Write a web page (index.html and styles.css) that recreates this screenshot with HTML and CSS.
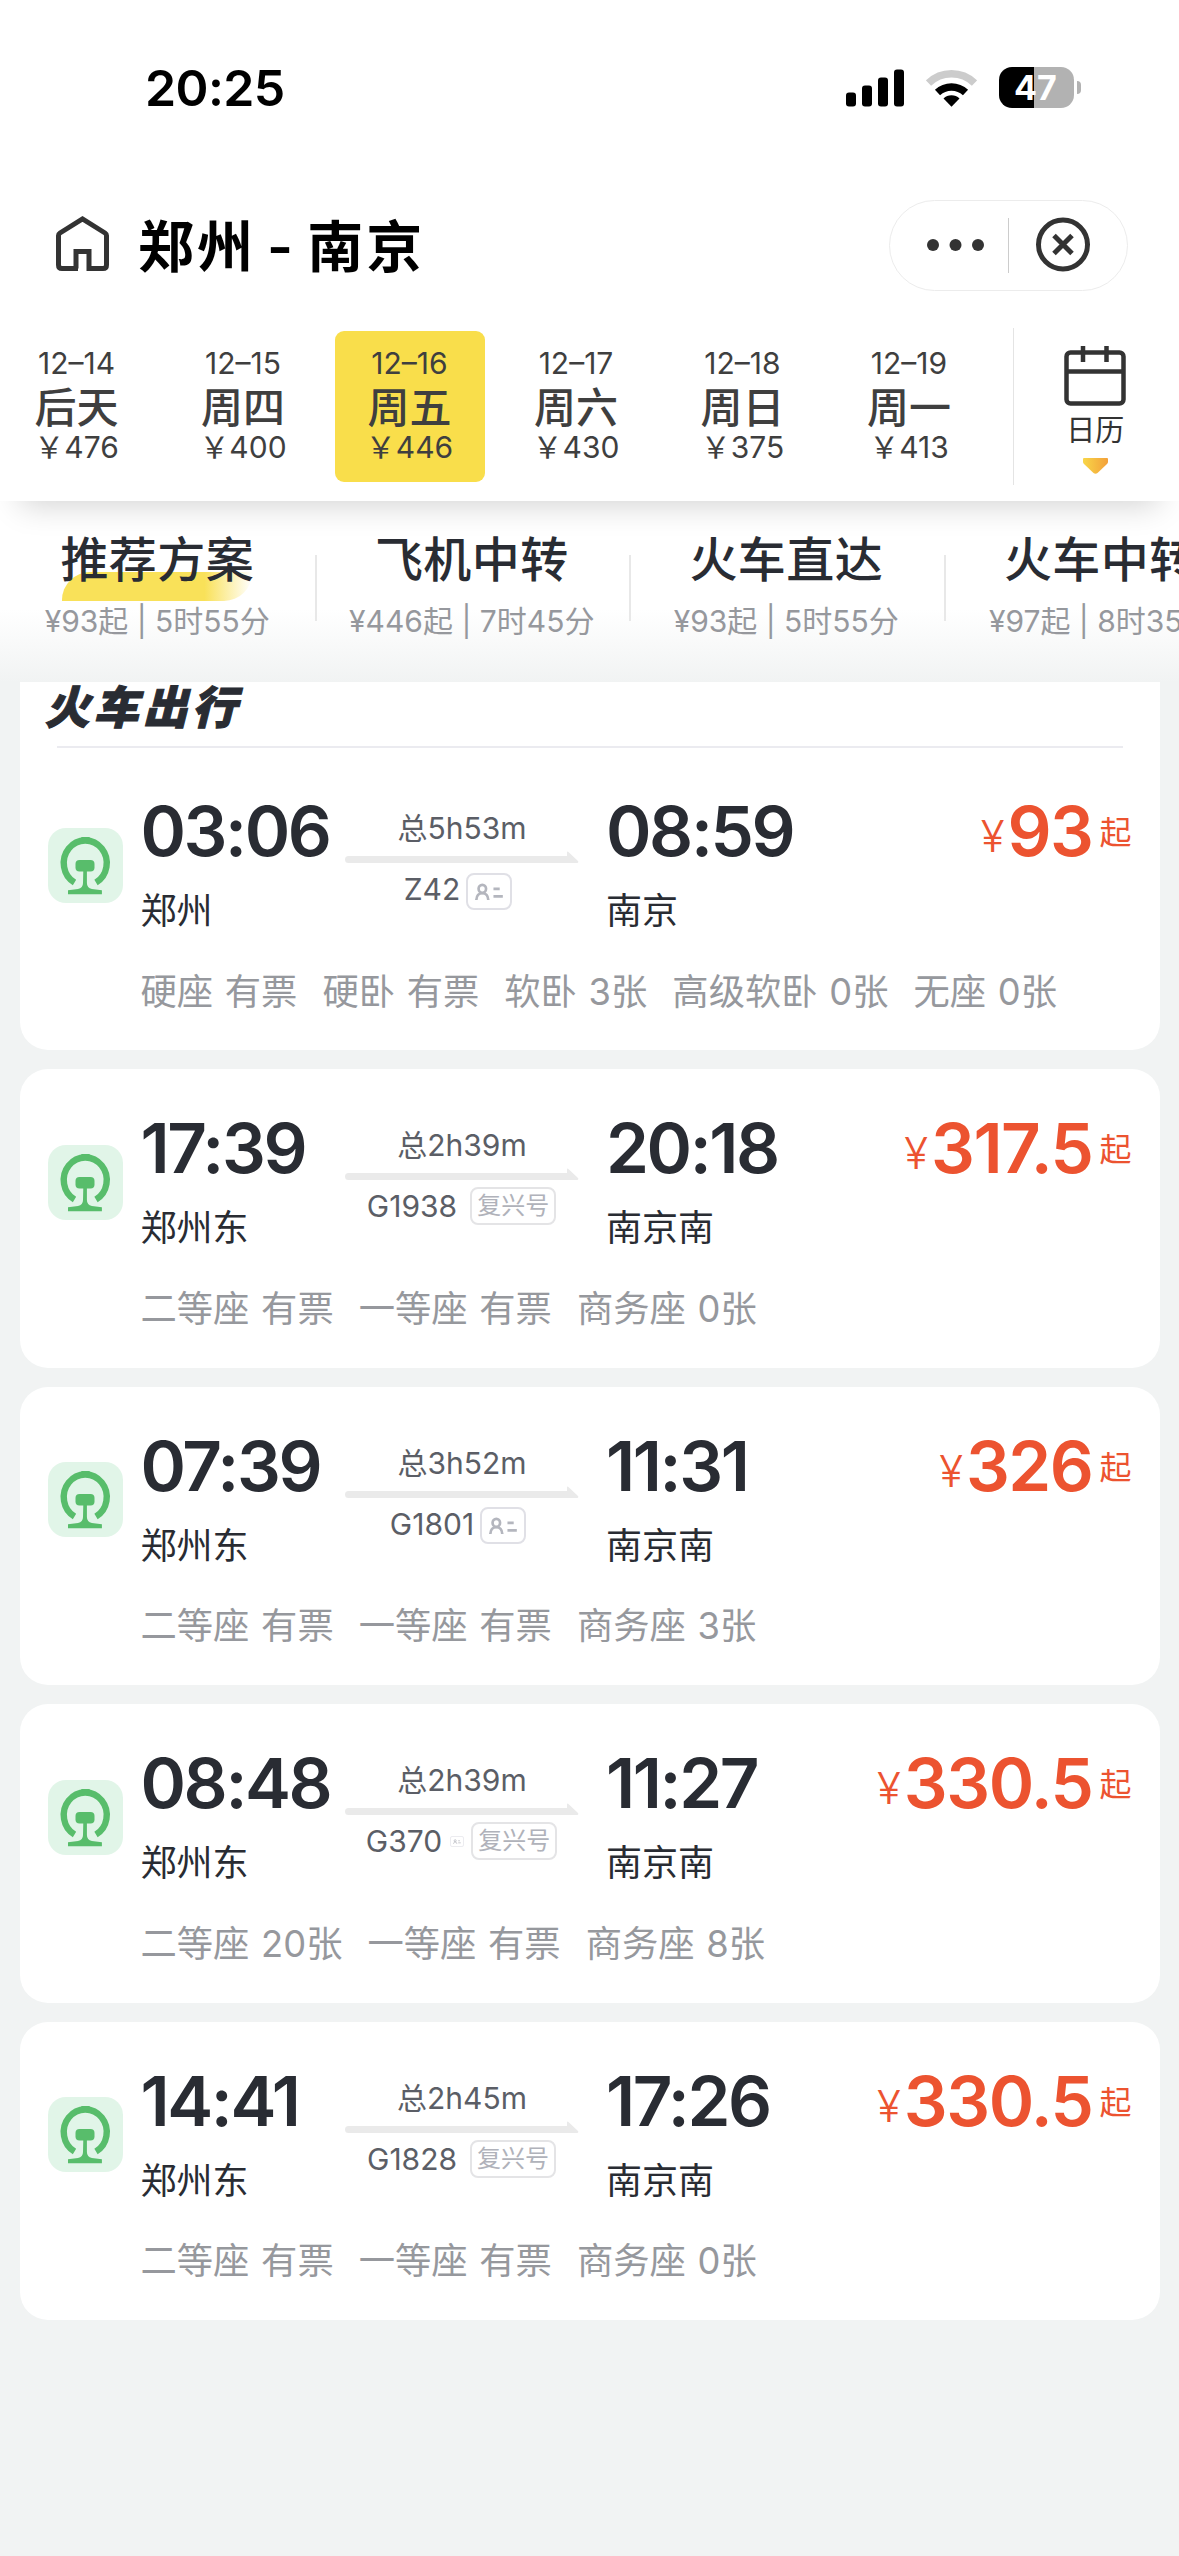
FILE: index.html
```html
<!DOCTYPE html>
<html lang="zh">
<head>
    <meta charset="UTF-8">
    <meta name="viewport" content="width=device-width, initial-scale=1.0">
    <title>郑州 - 南京</title>
    <link rel="stylesheet" href="styles.css">
</head>
<body>
<svg width="0" height="0" class="defs">
    <!-- 铁路图标 -->
    <symbol id="rail" viewBox="0 0 75 75">
        <path d="M26.5 54.5A21.5 22.500 0 1 1 48 54.500" fill="none" stroke="#58bd6b" stroke-width="6.400"/>
        <path d="M34 9h7q1 0 1.500 1.500L44 14H31l1.500-3.500Q33 9 34 9z" fill="#58bd6b"/>
        <rect x="27.500" y="32" width="19" height="11.500" rx="4" fill="#58bd6b"/>
        <path d="M35.300 42h3.600v13q0 5 5 6l10 1.300v4H20v-4l10-1.300q5-1 5-6z" fill="#58bd6b"/>
    </symbol>
    <symbol id="idcard" viewBox="0 0 46 37">
        <g fill="none" stroke="#b4b6be" stroke-width="3">
            <ellipse cx="15.500" cy="15.500" rx="4.200" ry="4.500"/>
            <path d="M8.800 28c.3-5 3-7.500 6.700-7.500s6.400 2.500 6.700 7.500"/>
            <path d="M28 15.500h7M28 24h10.500"/>
        </g>
    </symbol>
    <symbol id="arrow" viewBox="0 0 234 12">
        <path d="M3.500 5H222V1.500q0-2 2 0L233 10q1 2-1 2H3.500a3.500 3.500 0 0 1 0-7z" fill="#eaeaea"/>
    </symbol>
</svg>

<div class="header">
    <div class="status">
        <span class="clock">20:25</span>
        <svg class="signal" width="58" height="38" viewBox="0 0 58 38">
            <rect x="0" y="23.500" width="10" height="14" rx="3"/>
            <rect x="16" y="16.500" width="10" height="21" rx="3"/>
            <rect x="32" y="8.500" width="10" height="29" rx="3"/>
            <rect x="48" y="0.500" width="10" height="37" rx="3"/>
        </svg>
        <svg class="wifi" width="51" height="38" viewBox="0 0 51 38">
            <path d="M2.500 14A33 33 0 0 1 48.500 14" fill="none" stroke="#ccc" stroke-width="7.500"/>
            <path d="M11.500 23.500A20.500 20.500 0 0 1 39.500 23.500" fill="none" stroke="#000" stroke-width="7.500"/>
            <path d="M17.500 29.500a11.500 11.500 0 0 1 16 0l-8 8.200z"/>
        </svg>
        <div class="battery"><span>47</span></div>
        <i class="battery-cap"></i>
    </div>
    <div class="titlebar">
        <svg class="home" width="53" height="56" viewBox="0 0 53 56" fill="none" stroke="#333" stroke-width="5">
            <path d="M22 52.500H6Q2.500 52.500 2.500 49V19.500Q2.500 18 4 17L26.500 3 49 17Q50.500 18 50.500 19.500V49Q50.500 52.500 47 52.500H33V35.500H20V52.500"/>
        </svg>
        <h1>郑州 - 南京</h1>
        <div class="capsule">
            <svg width="237" height="89" viewBox="0 0 237 89">
                <g fill="#333"><circle cx="43" cy="44" r="6"/><circle cx="65.500" cy="44" r="6"/><circle cx="88" cy="44" r="6"/></g>
                <path d="M118.500 17v55" stroke="#ccc" stroke-width="1"/>
                <circle cx="173" cy="43.500" r="24.500" fill="none" stroke="#333" stroke-width="5"/>
                <path d="M164 34.500l18 18m0-18l-18 18" stroke="#333" stroke-width="5"/>
            </svg>
        </div>
    </div>
    <div class="dates">
        <div class="day"><span>12–14</span><b>后天</b><span>￥476</span></div>
        <div class="day"><span>12–15</span><b>周四</b><span>￥400</span></div>
        <div class="day active"><span>12–16</span><b>周五</b><span>￥446</span></div>
        <div class="day"><span>12–17</span><b>周六</b><span>￥430</span></div>
        <div class="day"><span>12–18</span><b>周日</b><span>￥375</span></div>
        <div class="day"><span>12–19</span><b>周一</b><span>￥413</span></div>
        <div class="calendar">
            <svg width="62" height="60" viewBox="0 0 62 60" fill="none" stroke="#333" stroke-width="4.500">
                <rect x="2.500" y="6.500" width="57" height="51" rx="4"/>
                <path d="M2 25.500h58M19 0v16M42.500 0v16"/>
            </svg>
            <span>日历</span>
            <svg width="25" height="16" viewBox="0 0 25 16">
                <defs><linearGradient id="tri"><stop offset="0" stop-color="#f8d648"/><stop offset="1" stop-color="#f3a03a"/></linearGradient></defs>
                <path d="M0 1q0-1 1-1h23q1 0 1 1v3q0 1-1 2l-9.500 9q-2 1.500-4 0L1 6Q0 5 0 4z" fill="url(#tri)"/>
            </svg>
        </div>
    </div>
</div>

<div class="tabs">
    <div class="tab active"><h2>推荐方案</h2><p>¥93起 | 5时55分</p></div>
    <div class="tab"><h2>飞机中转</h2><p>¥446起 | 7时45分</p></div>
    <div class="tab"><h2>火车直达</h2><p>¥93起 | 5时55分</p></div>
    <div class="tab"><h2>火车中转</h2><p>¥97起 | 8时35分</p></div>
</div>

<div class="list">
    <div class="card first">
        <h3>火车出行</h3>
        <div class="train">
            <div class="logo"><svg width="75" height="75"><use href="#rail"/></svg></div>
            <div class="from"><div class="time">03:06</div><div class="station">郑州</div></div>
            <div class="trip">
                <div class="total">总5h53m</div>
                <svg width="234" height="12"><use href="#arrow"/></svg>
                <div class="number">Z42<svg class="idcard" width="46" height="37"><use href="#idcard"/></svg></div>
            </div>
            <div class="to"><div class="time">08:59</div><div class="station">南京</div></div>
            <div class="price"><i>¥</i><b>93</b><em>起</em></div>
            <div class="seats"><span>硬座 有票</span><span>硬卧 有票</span><span>软卧 3张</span><span>高级软卧 0张</span><span>无座 0张</span></div>
        </div>
    </div>
    <div class="card">
        <div class="train">
            <div class="logo"><svg width="75" height="75"><use href="#rail"/></svg></div>
            <div class="from"><div class="time">17:39</div><div class="station">郑州东</div></div>
            <div class="trip">
                <div class="total">总2h39m</div>
                <svg width="234" height="12"><use href="#arrow"/></svg>
                <div class="number">G1938<span class="tag">复兴号</span></div>
            </div>
            <div class="to"><div class="time">20:18</div><div class="station">南京南</div></div>
            <div class="price"><i>¥</i><b>317.5</b><em>起</em></div>
            <div class="seats"><span>二等座 有票</span><span>一等座 有票</span><span>商务座 0张</span></div>
        </div>
    </div>
    <div class="card">
        <div class="train">
            <div class="logo"><svg width="75" height="75"><use href="#rail"/></svg></div>
            <div class="from"><div class="time">07:39</div><div class="station">郑州东</div></div>
            <div class="trip">
                <div class="total">总3h52m</div>
                <svg width="234" height="12"><use href="#arrow"/></svg>
                <div class="number">G1801<svg class="idcard" width="46" height="37"><use href="#idcard"/></svg></div>
            </div>
            <div class="to"><div class="time">11:31</div><div class="station">南京南</div></div>
            <div class="price"><i>¥</i><b>326</b><em>起</em></div>
            <div class="seats"><span>二等座 有票</span><span>一等座 有票</span><span>商务座 3张</span></div>
        </div>
    </div>
    <div class="card">
        <div class="train">
            <div class="logo"><svg width="75" height="75"><use href="#rail"/></svg></div>
            <div class="from"><div class="time">08:48</div><div class="station">郑州东</div></div>
            <div class="trip">
                <div class="total">总2h39m</div>
                <svg width="234" height="12"><use href="#arrow"/></svg>
                <div class="number">G370<svg class="idcard mini" width="14" height="11"><use href="#idcard"/></svg><span class="tag">复兴号</span></div>
            </div>
            <div class="to"><div class="time">11:27</div><div class="station">南京南</div></div>
            <div class="price"><i>¥</i><b>330.5</b><em>起</em></div>
            <div class="seats"><span>二等座 20张</span><span>一等座 有票</span><span>商务座 8张</span></div>
        </div>
    </div>
    <div class="card">
        <div class="train">
            <div class="logo"><svg width="75" height="75"><use href="#rail"/></svg></div>
            <div class="from"><div class="time">14:41</div><div class="station">郑州东</div></div>
            <div class="trip">
                <div class="total">总2h45m</div>
                <svg width="234" height="12"><use href="#arrow"/></svg>
                <div class="number">G1828<span class="tag">复兴号</span></div>
            </div>
            <div class="to"><div class="time">17:26</div><div class="station">南京南</div></div>
            <div class="price"><i>¥</i><b>330.5</b><em>起</em></div>
            <div class="seats"><span>二等座 有票</span><span>一等座 有票</span><span>商务座 0张</span></div>
        </div>
    </div>
</div>
</body>
</html>
```
FILE: styles.css
```css
* {
    box-sizing: border-box;
}

body {
    margin: 0;
    width: 1179px;
    height: 2556px;
    overflow: hidden;
    background: #f1f3f3;
    font-family: Inter, "Noto Sans CJK SC", sans-serif;
    color: #292c33;
    white-space: nowrap;
}

h1, h2, h3, p {
    margin: 0;
}

i, em {
    font-style: normal;
}

svg {
    display: block;
    flex: none;
}

.defs {
    position: absolute;
}

/* 顶部 */
.header {
    position: relative;
    z-index: 1;
    height: 501px;
    background: #fff;
    box-shadow: 0 24px 30px -20px rgba(0, 0, 0, 0.18);
}

.status {
    display: flex;
    align-items: center;
    height: 175px;
    padding-left: 145px;
    color: #000;
}

.clock {
    width: 701px;
    font-size: 50px;
    font-weight: 600;
    letter-spacing: -0.600px;
}

.wifi {
    margin-left: 22px;
}

.battery {
    width: 75px;
    height: 41px;
    margin-left: 22px;
    padding-right: 2px;
    border-radius: 13px;
    background: linear-gradient(90deg, #000 35px, #b2b2b2 35px);
    color: #fff;
    font-size: 34px;
    font-weight: 700;
    line-height: 41px;
    text-align: center;
}

.battery-cap {
    width: 4px;
    height: 13px;
    margin-left: 3px;
    border-radius: 0 4px 4px 0;
    background: #b2b2b2;
}

.titlebar {
    display: flex;
    align-items: center;
    height: 141px;
    padding: 0 51px 0 56px;
}

.home {
    margin-bottom: 4px;
}

.titlebar h1 {
    margin: 0 0 6px 29px;
    color: #000;
    font-size: 56px;
    font-weight: 600;
    letter-spacing: 3px;
    word-spacing: -6px;
}

.capsule {
    width: 239px;
    height: 91px;
    margin-left: auto;
    border: 1px solid #ececec;
    border-radius: 46px;
}

.dates {
    display: flex;
    height: 185px;
    padding: 15px 0 0 1.500px;
}

.day {
    display: flex;
    flex-direction: column;
    align-items: center;
    width: 150px;
    height: 151px;
    margin-right: 16.500px;
    padding-top: 14px;
    border-radius: 9px;
    color: #3f3f3f;
    font-size: 30px;
    line-height: 36px;
}

.day b {
    height: 48px;
    font-size: 42px;
    font-weight: 500;
    line-height: 53px;
}

.day.active {
    background: #f9de4b;
}

.calendar {
    display: flex;
    flex-direction: column;
    align-items: center;
    flex: 1;
    height: 157px;
    margin: -3px 0 0 12px;
    padding: 18px 2px 0 0;
    border-left: 1px solid #e4e4e4;
    color: #333;
}

.calendar span {
    margin: 5px 0 8px;
    font-size: 29px;
    line-height: 39px;
}

/* 方案切换 */
.tabs {
    display: flex;
    height: 181px;
    overflow: hidden;
    background: linear-gradient(#fff 60%, #f1f3f3);
}

.tab {
    position: relative;
    flex: none;
    width: 314.500px;
    padding-top: 27px;
    text-align: center;
}

.tab h2 {
    position: relative;
    font-size: 48px;
    font-weight: 500;
    line-height: 64px;
    letter-spacing: 0.400px;
}

.tab p {
    color: #96989d;
    font-size: 30px;
    line-height: 58px;
}

.tab + .tab::before {
    content: "";
    position: absolute;
    left: 0;
    top: 54px;
    width: 2px;
    height: 66px;
    background: #e8e8e8;
}

.tab.active::before {
    content: "";
    position: absolute;
    left: 62px;
    top: 71px;
    width: 190px;
    height: 29px;
    border-radius: 28px 0 28px 0;
    background: linear-gradient(90deg, #f9e159 75%, #fff);
}

/* 车次列表 */
.list {
    padding: 0 19.500px;
}

.card {
    height: 298.500px;
    margin-bottom: 19px;
    border-radius: 28px;
    background: #fff;
}

.card.first {
    height: 368px;
    border-radius: 0 0 28px 28px;
}

.card h3 {
    height: 66px;
    margin: 0 37px 4px;
    border-bottom: 2px solid #ebebf0;
    font-size: 45px;
    font-weight: 900;
    line-height: 52px;
    letter-spacing: 4px;
    text-indent: -12px;
    font-style: italic;
    -webkit-text-stroke: 1px #292c33;
}

.train {
    display: grid;
    grid-template-columns: 93px 204.500px 261px 221px 1fr;
    grid-template-rows: 200px 80px;
    padding: 0 28px;
}

.logo {
    width: 75px;
    height: 75px;
    margin-top: 75.500px;
    border-radius: 18px;
    background: #e1f5e8;
}

.time {
    margin-top: 37px;
    font-size: 69px;
    font-weight: 600;
    line-height: 84px;
    letter-spacing: -2.400px;
}

.station {
    margin-top: 11px;
    font-size: 36px;
    line-height: 54px;
}

.trip {
    width: 234px;
    padding-top: 55px;
    color: #5b5e66;
    font-size: 30px;
    text-align: center;
}

.total {
    height: 44px;
    line-height: 42px;
}

.number {
    display: flex;
    align-items: center;
    justify-content: center;
    height: 48px;
    padding: 4px 1px 0 0;
}

.idcard {
    margin: 4px 7px 0 6px;
    border: 2px solid #e0e0e6;
    border-radius: 8px;
}

.idcard.mini {
    margin: 0 -6px 0 8px;
    border: 1px solid #ececf0;
    border-radius: 2px;
}

.tag {
    width: 86px;
    height: 38px;
    margin-left: 13px;
    border: 2px solid #e4e4e6;
    border-radius: 8px;
    color: #b0b2ba;
    font-size: 24px;
    line-height: 33px;
}

.price {
    display: flex;
    align-items: baseline;
    justify-content: flex-end;
    margin-top: 37px;
    color: #ec5330;
    line-height: 84px;
}

/* 货币符号和“起”比数字基线略高 */
.price i {
    margin-bottom: 4px;
    font-size: 44px;
    font-weight: 300;
    transform: translateY(-4px);
}

.price b {
    margin-left: 3px;
    font-size: 69px;
    font-weight: 600;
    letter-spacing: -1.500px;
}

.price em {
    margin-left: 7px;
    font-size: 32px;
    transform: translateY(-12px);
}

.seats {
    display: flex;
    grid-column: 2 / 6;
    gap: 25px;
    padding-top: 12.500px;
    color: #96989d;
    font-size: 36.300px;
    line-height: 54px;
    word-spacing: 1.500px;
}
```
